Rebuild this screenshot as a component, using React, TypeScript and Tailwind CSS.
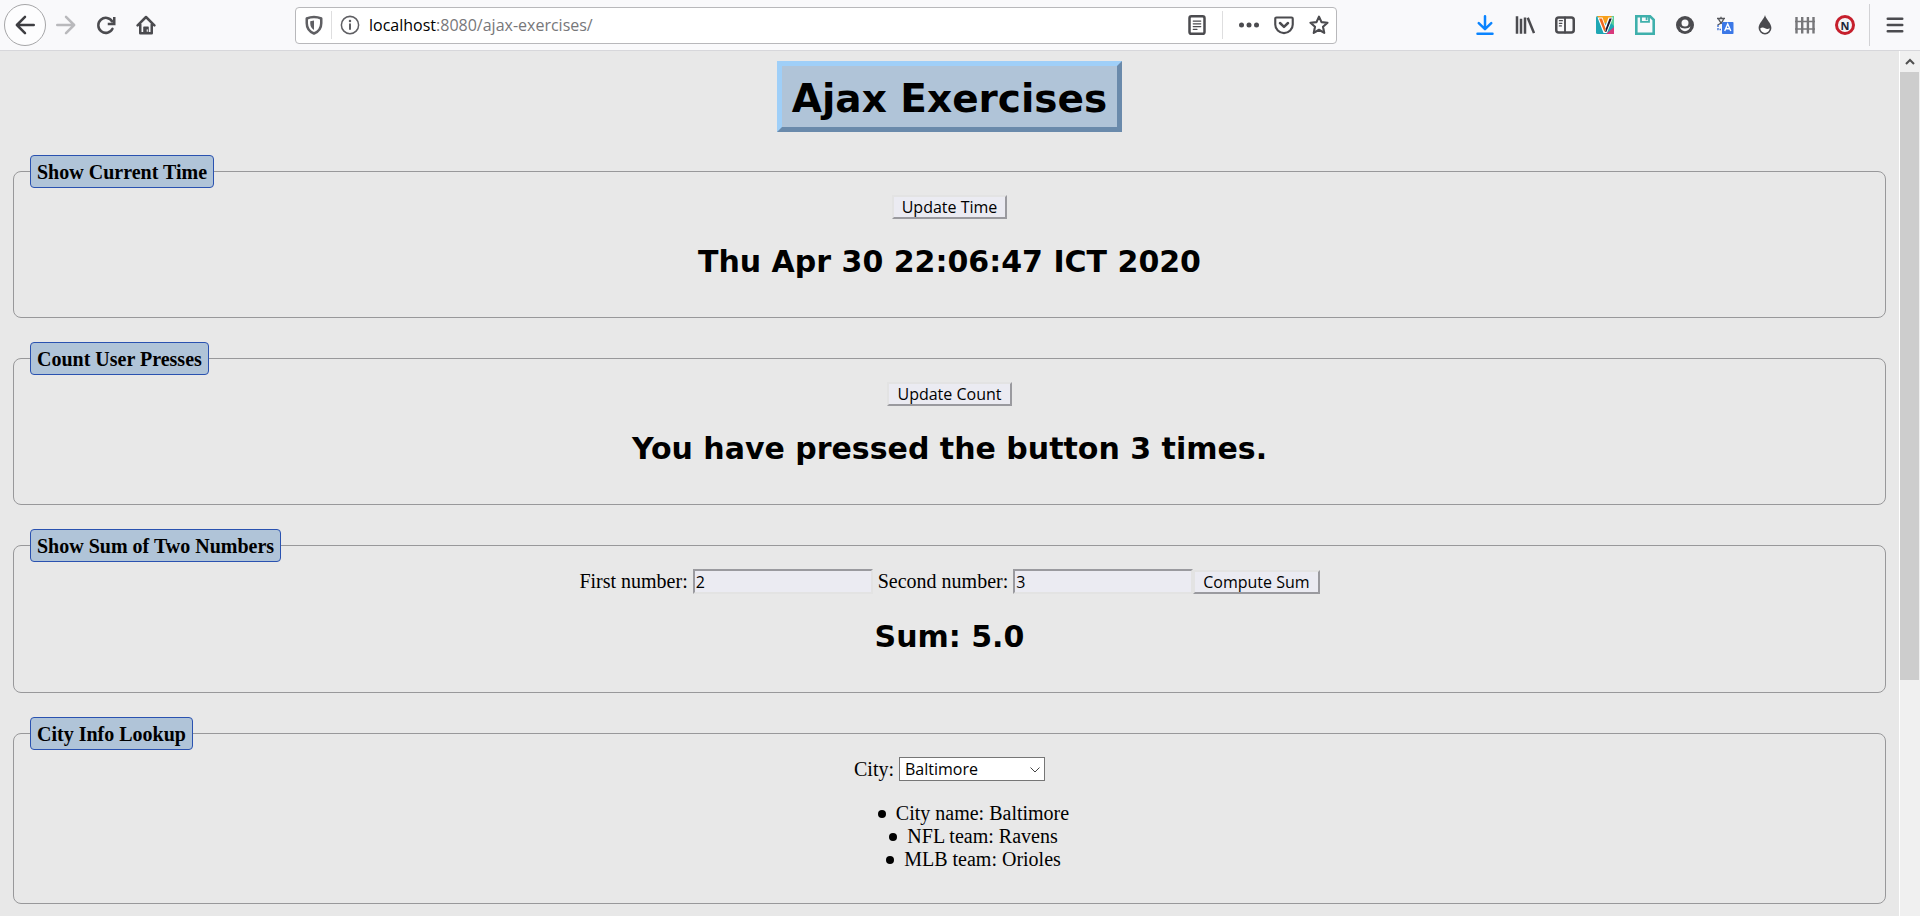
import React, { useState } from "react";
import type { ReactNode } from "react";

const button =
  "h-6 border-2 border-t-[#e3e3e3] border-l-[#e3e3e3] border-r-[#9a9a9f] border-b-[#9a9a9f] bg-[#ebebf2] px-2 font-['Open_Sans',sans-serif] text-base leading-5 text-black";
const field =
  "h-[25px] w-[180px] border-2 border-t-[#9a9a9f] border-l-[#9a9a9f] border-r-[#e3e3e3] border-b-[#e3e3e3] bg-[#ebebf2] px-px font-['Open_Sans',sans-serif] text-base leading-5 text-black outline-none";

function ToolButton({ label, children, className = "w-10" }: { label: string; children: ReactNode; className?: string }) {
  return (
    <button type="button" aria-label={label} className={`flex h-10 shrink-0 items-center justify-center text-[#4b4b4f] ${className}`}>
      {children}
    </button>
  );
}

function Icon({ children, className = "size-5" }: { children: ReactNode; className?: string }) {
  return (
    <svg viewBox="0 0 16 16" className={className} fill="none" stroke="currentColor" strokeWidth="2" strokeLinecap="round" strokeLinejoin="round" aria-hidden="true">
      {children}
    </svg>
  );
}

function Toolbar() {
  return (
    <header className="flex h-[51px] shrink-0 items-center border-b border-[#d7d7db] bg-[#f9f9fb]">
      <div className="flex items-center pl-1">
        <button type="button" aria-label="Back" className="flex size-[42px] items-center justify-center rounded-full border border-[#a6a6a8] bg-[#fdfdfe] text-[#3e3e42]">
          <Icon>
            <path d="M15 8H1.5M8 1.5 1.5 8 8 14.5" />
          </Icon>
        </button>
        <ToolButton label="Forward">
          <Icon className="size-5 text-[#b9b9bc]">
            <path d="M1 8h13.5M8 1.5 14.5 8 8 14.5" />
          </Icon>
        </ToolButton>
        <ToolButton label="Reload">
          <Icon>
            <path d="M13.2 11A6 6 0 1 1 13 5.2" />
            <path d="M14.6 1.6v5.6H9.4" strokeLinejoin="miter" strokeLinecap="butt" />
          </Icon>
        </ToolButton>
        <ToolButton label="Home">
          <Icon>
            <path d="M1.3 8.3 8 1.6l6.7 6.7" />
            <path d="M3.4 7.5v7h9.2v-7" />
            <path d="M6.3 14.5V9.6h3.4v4.900z" fill="currentColor" strokeWidth="1" />
            <path d="M9 11.8v1.2" stroke="#f9f9fb" strokeWidth="0.9" />
          </Icon>
        </ToolButton>
      </div>

      <div className="ml-[129px] flex h-[37px] w-[1042px] min-w-0 items-center rounded-sm border border-[#b8b8bb] bg-white text-[#5f5f63]">
        <button type="button" aria-label="Tracking protection" className="flex w-[35px] shrink-0 justify-center">
          <Icon>
            <path d="M8 1.6c2 0 4 .4 5.800 1.200v3.700c0 3.800-2.400 6.800-5.800 8.300-3.400-1.500-5.800-4.500-5.800-8.300V2.800C4 2 6 1.600 8 1.600z" />
            <path d="M8 4.300v7.600c-1.900-1.200-3-3-3-5.200V4.900z" fill="currentColor" stroke="none" />
          </Icon>
        </button>
        <span className="h-7 w-px shrink-0 bg-[#dededf]" />
        <button type="button" aria-label="Site information" className="flex w-9 shrink-0 justify-center">
          <Icon>
            <circle cx="8" cy="8" r="6.900" strokeWidth="1.200" />
            <path d="M8 7.400v3.800" strokeWidth="1.600" />
            <circle cx="8" cy="4.700" r="1" fill="currentColor" stroke="none" />
          </Icon>
        </button>
        <span className="min-w-0 flex-1 truncate pl-px font-['Open_Sans',sans-serif] text-base text-[#77777a]">
          <span className="text-black">localhost</span>:8080/ajax-exercises/
        </span>
        <ToolButton label="Reader view" className="w-9">
          <Icon>
            <rect x="2" y="1" width="12" height="14" rx="1.500" />
            <path d="M5 4.800h6M5 7h6M5 9.200h6M5 11.400h3" strokeWidth="1" />
          </Icon>
        </ToolButton>
        <span className="ml-[7px] h-7 w-px shrink-0 bg-[#dededf]" />
        <div className="flex pl-2">
          <ToolButton label="Page actions" className="w-[35px]">
            <svg viewBox="0 0 20 20" className="size-5" fill="currentColor" aria-hidden="true">
              <circle cx="2.500" cy="10" r="2.500" />
              <circle cx="10" cy="10" r="2.500" />
              <circle cx="17.500" cy="10" r="2.500" />
            </svg>
          </ToolButton>
          <ToolButton label="Save to Pocket" className="w-[35px]">
            <Icon>
              <path d="M2 2h12c.6 0 1 .4 1 1v4.500a7 7 0 0 1-14 0V3c0-.6.400-1 1-1z" strokeWidth="1.700" />
              <path d="M4.800 6.400 8 9.500l3.200-3.100" />
            </Icon>
          </ToolButton>
          <ToolButton label="Bookmark this page" className="w-[35px]">
            <Icon>
              <path d="m8 1.300 2 4.400 4.800.5-3.600 3.200 1 4.900L8 11.800l-4.200 2.500 1-4.900-3.600-3.200 4.800-.5z" strokeWidth="1.700" />
            </Icon>
          </ToolButton>
        </div>
      </div>

      <div className="ml-auto flex items-center">
        <ToolButton label="Downloads">
          <Icon className="size-5 text-[#0a84ff]">
            <path d="M8 1v10M3 6.500 8 11.300l5-4.800M2 15h12" />
          </Icon>
        </ToolButton>
        <ToolButton label="Library">
          <Icon>
            <path d="M1.600 1v14M4.800 3v12M8 2v13" strokeLinecap="butt" />
            <path d="m10.200 2.200 5 12.300" strokeLinecap="butt" />
          </Icon>
        </ToolButton>
        <ToolButton label="Sidebars">
          <Icon>
            <rect x="1" y="2" width="14" height="12" rx="2" strokeWidth="2" />
            <path d="M8 2v12" strokeWidth="1.500" />
            <path d="M3.500 4.500h2.400M3.500 6.600h2M3.500 8.700h1.600" strokeWidth="1" />
          </Icon>
        </ToolButton>
        <ToolButton label="V extension">
          <svg viewBox="0 0 18 18" className="size-[18px]" aria-hidden="true">
            <rect width="18" height="18" rx="1.500" fill="#1fa7b4" />
            <path d="M1 0h16L9 8z" fill="#f8a01c" />
            <path d="M18 0v10l-5-5 3-5z" fill="#5ccf9a" />
            <path d="M18 11v7h-8z" fill="#d9387c" />
            <path d="M1.500 1.500h5l3 8 3-8h4.500L11 17H7.500z" fill="#fff" />
            <path d="M3 2.500h3l3.500 10L8.500 16z" fill="#f2691e" />
            <path d="M13.500 2.500h2.300L10.300 16H9.200l.6-3.500z" fill="#191731" />
          </svg>
        </ToolButton>
        <ToolButton label="Save page">
          <svg viewBox="0 0 20 20" className="size-5" fill="none" stroke="#3fb0ac" strokeWidth="2.600" aria-hidden="true">
            <path d="M1.300 1.300h13.800l3.600 3.400v14H1.300z" />
            <path d="M6 1.500v5.300h8V1.500" strokeWidth="1.800" />
            <path d="M11.600 2v3.200" strokeWidth="1.800" />
          </svg>
        </ToolButton>
        <ToolButton label="Account">
          <svg viewBox="0 0 18 18" className="size-[18px]" aria-hidden="true">
            <circle cx="9" cy="9" r="9" fill="#4b4b4f" />
            <circle cx="9" cy="7" r="3.500" fill="#f9f9fb" />
            <path d="M3.600 10.300c1 1.400 3 2.200 5.400 2.200s4.400-.8 5.400-2.200c-.5 2.900-2.600 4.900-5.400 4.900s-4.900-2-5.400-4.900z" fill="#f9f9fb" />
          </svg>
        </ToolButton>
        <ToolButton label="Translate">
          <svg viewBox="0 0 18 18" className="size-[18px]" fill="none" aria-hidden="true">
            <path d="M1 2.500h8M5 .8v1.700M2.600 3.200c1 2.500 3 4.300 5 5.200M7.500 3.200C6.500 6 4 8 1.500 9" stroke="#55565a" strokeWidth="1.300" />
            <path d="M2 9v4.500h3" stroke="#4a78d8" strokeWidth="1.500" strokeDasharray="2 1" />
            <rect x="6" y="6" width="11.500" height="12" rx=".8" fill="#3b78e7" />
            <path d="m8.700 15 3-7 3.100 7M9.800 12.800h4" stroke="#fff" strokeWidth="1.400" />
          </svg>
        </ToolButton>
        <ToolButton label="Forget">
          <svg viewBox="0 0 14 20" className="h-5 w-3.5" aria-hidden="true">
            <path d="M7 0c.7 4 6.400 8 6.400 13A6.400 6.400 0 0 1 .6 13C.6 8 6.300 4 7 0z" fill="#4b4b4f" />
            <path d="M2.300 13.200c1.600-1 3.200-.9 4.700 0s3.200.9 4.700 0A4.700 4.700 0 0 1 7 17.900a4.700 4.700 0 0 1-4.700-4.700z" fill="#fff" />
          </svg>
        </ToolButton>
        <ToolButton label="Fence">
          <svg viewBox="0 0 20 18" className="h-[18px] w-5" fill="none" stroke="#77777a" strokeWidth="2.400" aria-hidden="true">
            <path d="M1.500 1v16.500M7.200 1v16.500M12.900 1v16.500M18.500 1v16.500" />
            <path d="M0 5.500h20M0 13h20" strokeWidth="1.600" />
          </svg>
        </ToolButton>
        <ToolButton label="NoScript">
          <span className="flex size-5 items-center justify-center rounded-full border-[3px] border-[#c61f2c] bg-[#f4f4f6] font-['Open_Sans',sans-serif] text-[11px] leading-none font-bold text-[#1d2536]">N</span>
        </ToolButton>
        <span className="ml-1 h-[42px] w-px shrink-0 bg-[#d2d2d5]" />
        <ToolButton label="Menu" className="w-[50px]">
          <Icon>
            <path d="M2.200 3h11.600M2.200 8h11.600M2.200 13h11.600" />
          </Icon>
        </ToolButton>
      </div>
    </header>
  );
}

function Section({ title, children }: { title: string; children: ReactNode }) {
  return (
    <fieldset className="rounded-lg border border-[#98989a] px-4 pb-8 text-center">
      <legend className="rounded-sm border border-[#2a52b0] bg-[#b0c4d8] px-1.5 pt-1 pb-[3px] text-left leading-6 font-bold">
        {title}
      </legend>
      {children}
    </fieldset>
  );
}

function Result({ children }: { children: ReactNode }) {
  return <h2 className="mt-6 pb-1 font-[Verdana,'DejaVu_Sans',sans-serif] text-[30px] leading-[38px] font-bold">{children}</h2>;
}

export default function App() {
  const [count, setCount] = useState(3);
  const [time, setTime] = useState("Thu Apr 30 22:06:47 ICT 2020");
  const [first, setFirst] = useState("2");
  const [second, setSecond] = useState("3");
  const [sum, setSum] = useState("5.0");

  return (
    <div className="flex h-screen flex-col overflow-hidden bg-[#e8e8e8] text-black">
      <Toolbar />
      <div className="flex min-h-0 flex-1">
        <main className="min-w-0 flex-1 overflow-hidden px-[13px] pt-2.5 font-['Liberation_Serif',serif] text-[20px] leading-[23px]">
          <h1 className="mx-auto w-fit border-[5px] border-t-[#9fcff8] border-r-[#6a8aab] border-b-[#6a8aab] border-l-[#9fcff8] bg-[#b0c4d8] px-2.5 pt-2 pb-1 font-[Verdana,'DejaVu_Sans',sans-serif] text-[39px] leading-[49px] font-bold">
            Ajax Exercises
          </h1>
          <div className="flex flex-col gap-6 pt-[23px]">
            <Section title="Show Current Time">
              <div className="flex justify-center pt-[7px]">
                <button type="button" className={button} onClick={() => setTime(new Date().toString().slice(0, 24))}>
                  Update Time
                </button>
              </div>
              <Result>{time}</Result>
            </Section>

            <Section title="Count User Presses">
              <div className="flex justify-center pt-[7px]">
                <button type="button" className={button} onClick={() => setCount(count + 1)}>
                  Update Count
                </button>
              </div>
              <Result>You have pressed the button {count} times.</Result>
            </Section>

            <Section title="Show Sum of Two Numbers">
              <div className="flex items-center justify-center pt-[7px]">
                <label htmlFor="first">First number:</label>
                <input id="first" className={`ml-[5px] ${field}`} value={first} onChange={(e) => setFirst(e.target.value)} />
                <label htmlFor="second" className="ml-[5px]">Second number:</label>
                <input id="second" className={`ml-[5px] ${field}`} value={second} onChange={(e) => setSecond(e.target.value)} />
                <button type="button" className={button} onClick={() => setSum((Number(first) + Number(second)).toFixed(1))}>
                  Compute Sum
                </button>
              </div>
              <Result>Sum: {sum}</Result>
            </Section>

            <Section title="City Info Lookup">
              <div className="flex items-center justify-center pt-[7px]">
                <label htmlFor="city">City:</label>
                <div className="relative ml-[5px] flex">
                  <select id="city" defaultValue="Baltimore" className="h-6 w-[146px] appearance-none border border-[#767676] bg-white pl-[5px] font-['Open_Sans',sans-serif] text-base leading-5 text-black">
                    <option>Baltimore</option>
                  </select>
                  <svg viewBox="0 0 10 6" className="pointer-events-none absolute top-2.5 right-[5px] h-1.5 w-2.5" fill="none" stroke="#444" aria-hidden="true">
                    <path d="m.5.5 4.500 4.500L9.500.5" />
                  </svg>
                </div>
              </div>
              <ul className="pt-[21px] pl-12">
                {["City name: Baltimore", "NFL team: Ravens", "MLB team: Orioles"].map((line) => (
                  <li key={line} className="flex items-center justify-center gap-2.5 before:size-2 before:rounded-full before:bg-black">
                    {line}
                  </li>
                ))}
              </ul>
            </Section>
          </div>
        </main>

        <div className="flex w-[21px] shrink-0 flex-col border-l border-white bg-[#f0f0f0]" aria-hidden="true">
          <div className="flex h-[21px] items-center justify-center">
            <svg viewBox="0 0 10 7" className="h-[7px] w-2.5" fill="none" stroke="#505050" strokeWidth="2">
              <path d="m1 6 4-4 4 4" />
            </svg>
          </div>
          <div className="mr-px h-[608px] bg-[#cdcdcd]" />
        </div>
      </div>
    </div>
  );
}
